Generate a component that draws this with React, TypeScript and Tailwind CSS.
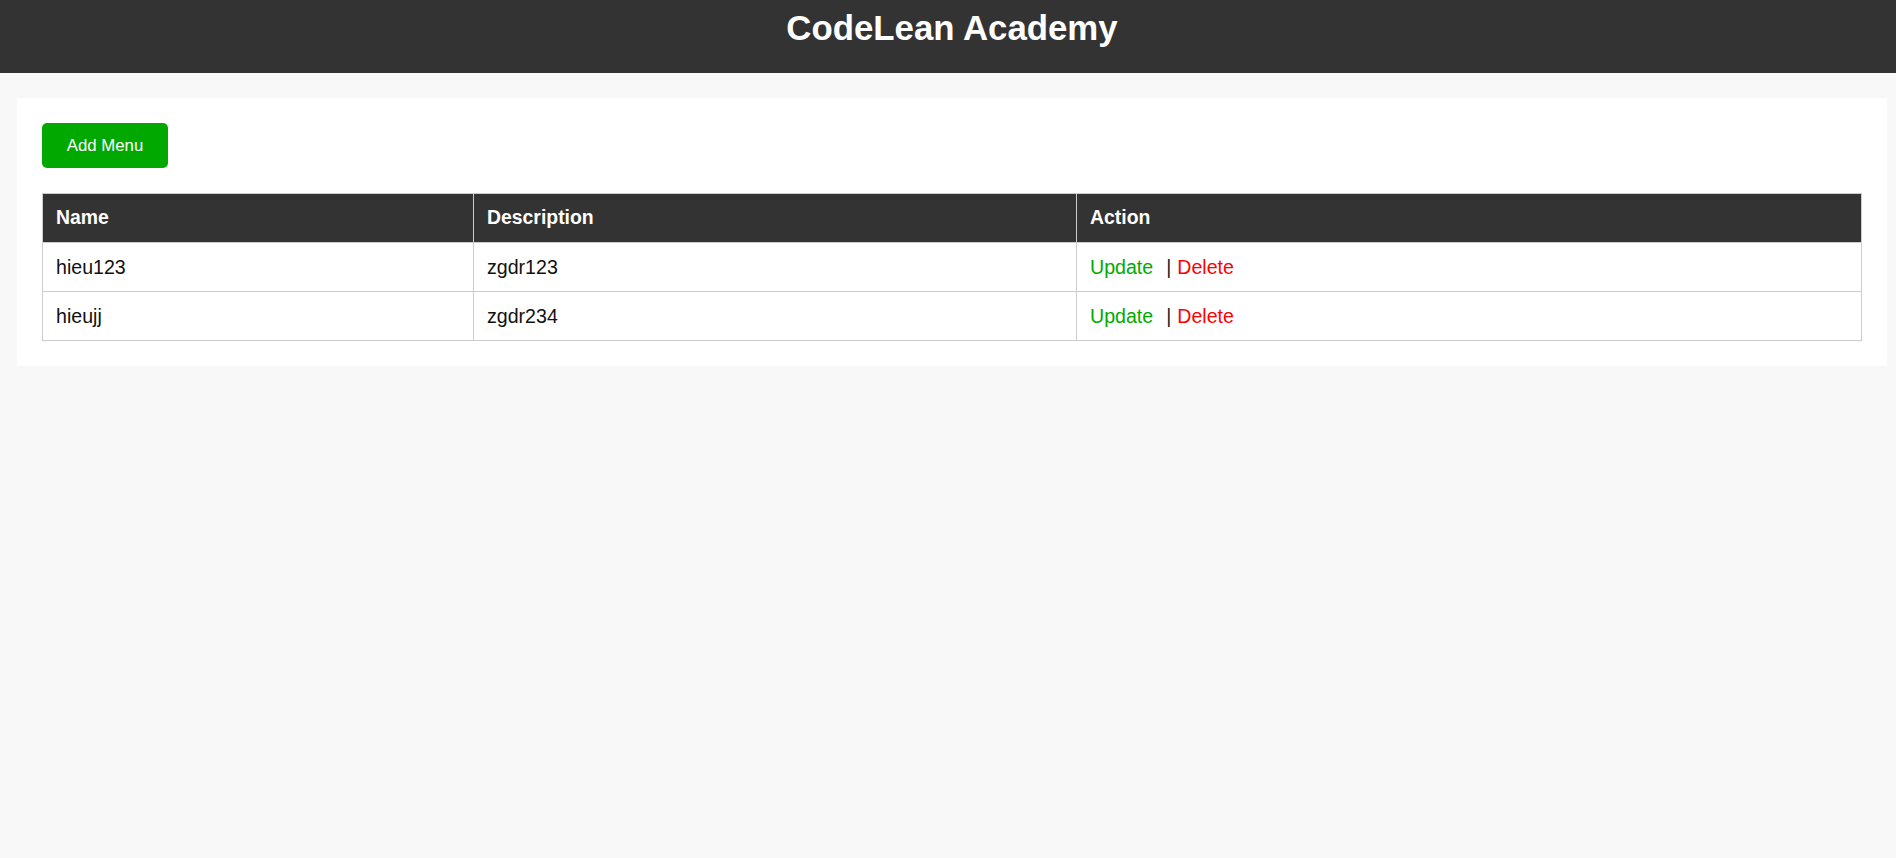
import React from "react";

const rows = [
  { name: "hieu123", desc: "zgdr123" },
  { name: "hieujj", desc: "zgdr234" },
];

export default function App() {
  return (
    <div
      className="min-h-[858px] w-full bg-[#f8f8f8] text-black"
      style={{ fontFamily: '"Liberation Sans", Arial, sans-serif' }}
    >
      <header className="h-[73px] bg-[#333333] pl-[8px] pt-[8px]">
        <h1 className="m-0 text-center text-[34.8px] font-bold leading-[40px] text-white">
          CodeLean Academy
        </h1>
      </header>
      <div className="pt-[25px] pl-[17px]">
        <div className="w-[1870px] bg-white px-[25px] py-[25px]">
          <button className="flex h-[45px] w-[126px] items-center justify-center rounded-[5px] bg-[#00a800] text-[16.8px] text-white">
            Add Menu
          </button>
          <div className="mt-[25px] w-[1820px] border-l border-t border-[#cccccc]">
            <div className="flex h-[49px] border-b border-[#cccccc] bg-[#333333] text-[19.4px] font-bold text-white">
              <div className="flex w-[431px] items-center border-r border-[#cccccc] px-[13px]">Name</div>
              <div className="flex w-[603px] items-center border-r border-[#cccccc] px-[13px]">Description</div>
              <div className="flex w-[785px] items-center border-r border-[#cccccc] px-[13px]">Action</div>
            </div>
            {rows.map((r) => (
              <div key={r.name} className="flex h-[49px] border-b border-[#cccccc] text-[19.6px] text-[#111111]">
                <div className="flex w-[431px] items-center border-r border-[#cccccc] px-[13px] pt-[2px]">{r.name}</div>
                <div className="flex w-[603px] items-center border-r border-[#cccccc] px-[13px] pt-[2px]">{r.desc}</div>
                <div className="flex w-[785px] items-center border-r border-[#cccccc] px-[13px] pt-[2px]">
                  <span className="text-[#00aa00]">Update</span>
                  <span className="ml-[13px] text-[#222222]">|</span>
                  <span className="ml-[6px] text-[#ff0000]">Delete</span>
                </div>
              </div>
            ))}
          </div>
        </div>
      </div>
    </div>
  );
}
